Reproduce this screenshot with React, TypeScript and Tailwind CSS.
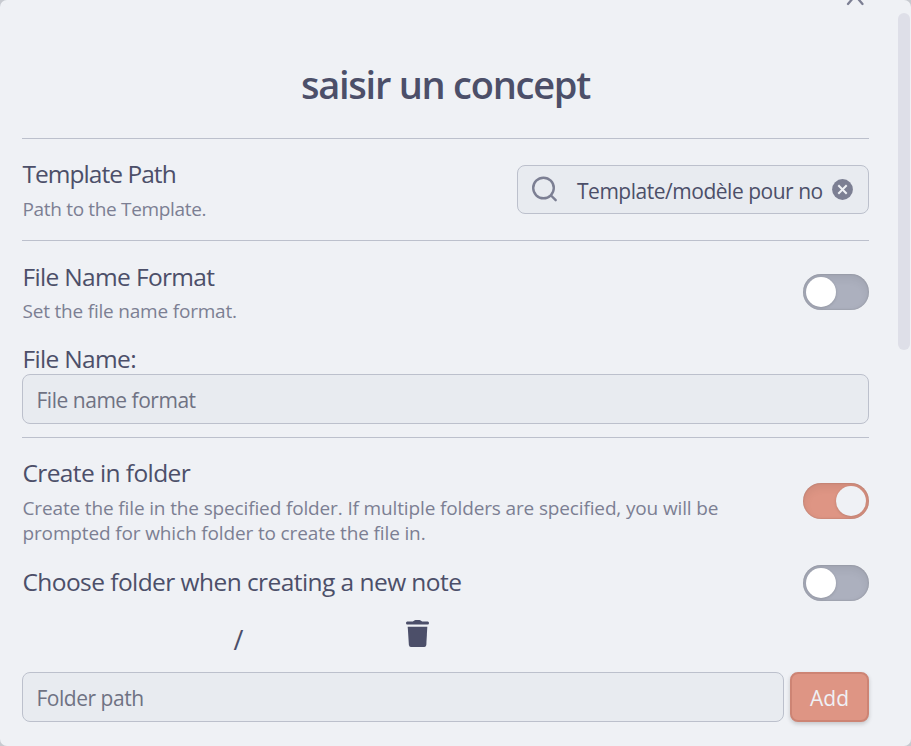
import type { ReactNode } from "react";

function Name({ children, className = "tracking-[-0.59px]" }: { children: ReactNode; className?: string }) {
  return <div className={`h-8 whitespace-nowrap pl-[0.4px] text-[24.5px] leading-8 text-[#4c4f69] ${className}`}>{children}</div>;
}

function Description({ children, className = "" }: { children: ReactNode; className?: string }) {
  return <div className={`whitespace-nowrap pl-[0.5px] text-[19px] leading-[25px] text-[#7c7f93] ${className}`}>{children}</div>;
}

function Toggle({ on = false }: { on?: boolean }) {
  return (
    <div
      role="switch"
      aria-checked={on}
      className={`flex h-9 w-[66px] shrink-0 items-center rounded-full px-[3px] shadow-[inset_0_4px_10px_rgba(0,0,0,0.07),inset_0_0_2px_rgba(0,0,0,0.21)] ${
        on ? "justify-end bg-[#de9584]" : "justify-start bg-[#acb0be]"
      }`}
    >
      <div className={`size-[30px] rounded-full shadow-[0_1px_3px_rgba(0,0,0,0.15)] ${on ? "bg-[#eff1f5]" : "bg-white"}`} />
    </div>
  );
}

function Field({ children, className = "" }: { children: ReactNode; className?: string }) {
  return (
    <div className={`flex items-center rounded-lg border border-[#bcc0cc] bg-[#e8ebf0] text-[21px] tracking-[-0.48px] ${className}`}>
      {children}
    </div>
  );
}

export default function App() {
  return (
    <div className="h-[746px] w-[911px] overflow-hidden bg-[#c7cad0] font-['Open_Sans','Noto_Sans',sans-serif]">
      <div className="relative h-full overflow-hidden rounded-[7px] bg-[#eff1f5] pr-[42px] pl-[22px]">
        <svg className="absolute top-[-14px] left-[845px]" width="20" height="20" fill="none" stroke="#7c7f93" strokeWidth="2.3" strokeLinecap="round">
          <path d="M3 1 17.5 18M17.5 1 3 18" />
        </svg>
        <div className="absolute top-[13px] left-[898px] h-[337px] w-3 rounded-full bg-[#dedfe8]" />

        <h1 className="h-[138px] pt-[58px] text-center text-[38px] leading-[52px] font-semibold whitespace-nowrap text-[#4c4f69]">
          <span className="tracking-[-1.25px]">saisir un concept</span>
        </h1>

        <section className="flex h-[102px] justify-between border-t border-[#bcc0cc] pt-[19px]">
          <div>
            <Name className="tracking-[-0.95px]">Template Path</Name>
            <Description className="pt-[7px] tracking-[-0.33px]">Path to the Template.</Description>
          </div>
          <Field className="mt-[7px] h-[49px] w-[352px] pr-[15px] pl-[14px]">
            <svg className="shrink-0" width="28" height="28" fill="none" stroke="#7c7f93" strokeWidth="2.4" strokeLinecap="round">
              <circle cx="11.5" cy="12" r="10.3" />
              <path d="m19 19.5 4.7 4.7" />
            </svg>
            <span className="ml-[17px] min-w-0 flex-1 whitespace-nowrap pt-[4px] text-[#4c4f69]">Template/modèle pour no</span>
            <svg className="shrink-0" width="21" height="21">
              <circle cx="10.5" cy="10.5" r="10.4" fill="#7c7f93" />
              <path d="m6.3 6.3 8.4 8.4m0-8.4-8.4 8.4" stroke="#eff1f5" strokeWidth="2" />
            </svg>
          </Field>
        </section>

        <section className="h-[197px] border-t border-[#bcc0cc] pt-5">
          <div className="flex h-[82px] justify-between">
            <div>
              <Name className="tracking-[-0.65px]">File Name Format</Name>
              <Description className="pt-[6px] tracking-[-0.2px]">Set the file name format.</Description>
            </div>
            <div className="pt-[13px]"><Toggle /></div>
          </div>
          <Name className="tracking-[-0.65px]">File Name:</Name>
          <Field className="mt-[-1px] h-[50px] pt-[4px] pl-[13.5px] text-[#6f7283]">File name format</Field>
        </section>

        <section className="border-t border-[#bcc0cc] pt-[19px]">
          <div className="flex h-[108px] justify-between">
            <div>
              <Name>Create in folder</Name>
              <Description className="pt-[7px] tracking-[-0.14px]">
                Create the file in the specified folder. If multiple folders are specified, you will be
                <br />
                prompted for which folder to create the file in.
              </Description>
            </div>
            <div className="pt-[26px]"><Toggle on /></div>
          </div>
          <div className="flex h-[54px] justify-between">
            <Name className="pt-[1px] tracking-[-0.56px]">Choose folder when creating a new note</Name>
            <Toggle />
          </div>
          <div className="flex h-[53px] text-[#4c4f69]">
            <span className="w-[384px] pl-[211.5px] text-[27px] leading-[41px]">/</span>
            <svg className="mt-[1px]" width="24" height="28" fill="#4c4f69">
              <path d="M1.2 1.5h5.6l1.2-.8q.7-.6 1.5-.6h4q.8 0 1.5.6l1.2.8h5.6q1.2 0 1.2 1.5t-1.2 1.5H1.2Q0 4.500 0 3T1.2 1.500Z" />
              <path d="M1.7 6.700h19.600l-1 18.200Q20 27 18.300 27H4.900q-1.800 0-2-2.100Z" />
            </svg>
          </div>
          <div className="flex gap-[6px]">
            <Field className="h-[50px] w-[762px] pt-[4px] pl-[13.5px] text-[#6f7283]">Folder path</Field>
            <button className="h-[50px] w-[79px] rounded-lg border-2 border-[#cd8474] bg-[#de9584] pt-[4px] text-[21px] text-[#eff1f5] shadow-[0_2px_4px_rgba(0,0,0,0.18)]">Add</button>
          </div>
        </section>
      </div>
    </div>
  );
}
